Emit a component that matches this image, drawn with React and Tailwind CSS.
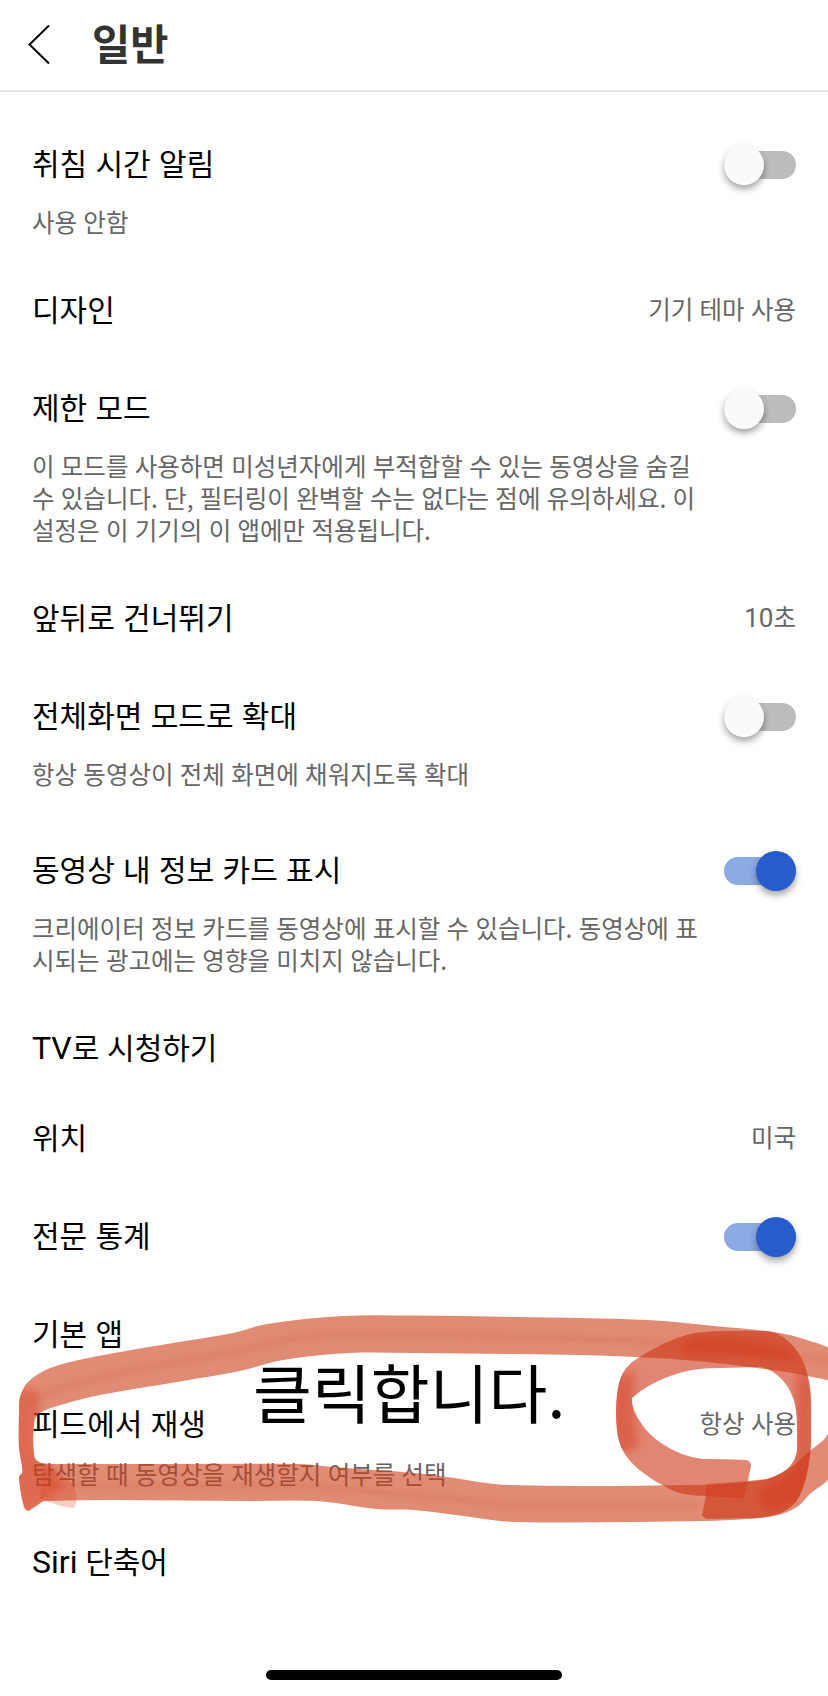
const rows = [
  { title: '취침 시간 알림', toggle: 'off', lines: ['사용 안함'] },
  { title: '디자인', value: '기기 테마 사용' },
  {
    title: '제한 모드',
    toggle: 'off',
    lines: [
      '이 모드를 사용하면 미성년자에게 부적합할 수 있는 동영상을 숨길',
      '수 있습니다. 단, 필터링이 완벽할 수는 없다는 점에 유의하세요. 이',
      '설정은 이 기기의 이 앱에만 적용됩니다.',
    ],
  },
  { title: '앞뒤로 건너뛰기', latinValue: '10', value: '초' },
  { title: '전체화면 모드로 확대', toggle: 'off', lines: ['항상 동영상이 전체 화면에 채워지도록 확대'] },
  {
    title: '동영상 내 정보 카드 표시',
    toggle: 'on',
    lines: [
      '크리에이터 정보 카드를 동영상에 표시할 수 있습니다. 동영상에 표',
      '시되는 광고에는 영향을 미치지 않습니다.',
    ],
  },
  { latin: 'TV', title: '로 시청하기' },
  { title: '위치', value: '미국' },
  { title: '전문 통계', toggle: 'on' },
  { title: '기본 앱' },
  { title: '피드에서 재생', value: '항상 사용', lines: ['탐색할 때 동영상을 재생할지 여부를 선택'] },
  { latin: 'Siri', title: ' 단축어' },
];

// Marker outlines, drawn over the "피드에서 재생" row
const loopOuter = [
  [19, 1413], [20, 1397], [28, 1382], [50, 1368], [93, 1357], [167, 1344], [233, 1333], [267, 1324],
  [343, 1316], [414, 1315.5], [514, 1317], [647, 1320], [714, 1326], [774, 1332], [807, 1340], [836, 1352],
  [860, 1380], [860, 1440], [828, 1480], [811, 1493], [797, 1507], [774, 1516], [747, 1519], [704, 1521],
  [514, 1522], [464, 1516], [414, 1510], [377, 1509], [317, 1501], [250, 1501], [46, 1501], [33, 1508],
  [28, 1511], [24, 1507], [19, 1477], [22.5, 1472], [19, 1448],
];
const loopInner = [
  [836, 1386], [807, 1376], [764, 1369], [697, 1361], [614, 1356], [514, 1354], [414, 1353], [350, 1353],
  [283, 1360], [240, 1371], [183, 1381], [100, 1395], [57, 1406], [40, 1413], [34.5, 1420], [34.5, 1457],
  [42, 1463], [67, 1464], [300, 1464], [333, 1467], [414, 1473], [447, 1477], [507, 1485], [697, 1485],
  [747, 1482], [767, 1479], [787, 1470], [811, 1450], [826, 1437], [832, 1420],
];

// Closed Catmull-Rom spline through the points
function smooth(points) {
  const n = points.length;
  let d = `M${points[0][0]} ${points[0][1]}`;
  for (let i = 0; i < n; i++) {
    const [p0, p1, p2, p3] = [points[(i - 1 + n) % n], points[i], points[(i + 1) % n], points[(i + 2) % n]];
    const len = Math.hypot(p2[0] - p1[0], p2[1] - p1[1]);
    const t1 = len / (Math.hypot(p1[0] - p0[0], p1[1] - p0[1]) + len) / 3;
    const t2 = len / (Math.hypot(p3[0] - p2[0], p3[1] - p2[1]) + len) / 3;
    d += `C${p1[0] + (p2[0] - p0[0]) * t1} ${p1[1] + (p2[1] - p0[1]) * t1} ${p2[0] - (p3[0] - p1[0]) * t2} ${p2[1] - (p3[1] - p1[1]) * t2} ${p2[0]} ${p2[1]}`;
  }
  return `${d}Z`;
}

const loop = `${smooth(loopOuter)}${smooth(loopInner)}`;
const ring =
  'M702 1515Q704 1519 710 1519L754 1518Q772 1517 781 1513Q794 1507 799 1497Q805 1485 807 1473Q811 1456 811 1440V1403Q811 1388 807 1373Q804 1359 794 1347Q784 1335 772 1332Q764 1330 724 1331Q709 1331 694 1333Q677 1337 661 1345Q643 1354 631 1363Q622 1371 619 1383Q616 1396 616 1413Q616 1435 621 1447Q627 1459 637 1468Q649 1478 664 1486Q674 1492 684 1494Q694 1496 706 1496Z' +
  'M746 1460Q720 1459 702 1459Q680 1456 661 1443Q649 1435 641 1423Q631 1409 632 1398Q641 1390 654 1383Q670 1375 687 1371Q700 1368 720 1368L761 1367Q770 1369 777 1375Q786 1382 791 1393Q797 1405 797 1425V1450Q796 1459 790 1466Q783 1474 767 1479L748 1481L751 1466Q751 1461 746 1460Z';

function Marker() {
  return (
    <svg className="pointer-events-none absolute left-0 top-[1296px] h-[240px] w-[828px] blur-[0.6px]" viewBox="0 1296 828 240" fill="none">
      <defs>
        <clipPath id="loop">
          <path d={loop} clipRule="evenodd" />
        </clipPath>
        <clipPath id="ring">
          <path d={ring} clipRule="evenodd" />
        </clipPath>
      </defs>
      <path d={loop} fillRule="evenodd" fill="#cd3e19" fillOpacity="0.6" />
      <path d="M44 1464Q64 1474 74 1486Q79 1500 74 1508Q58 1507 40 1498Z" fill="#d93a18" fillOpacity="0.25" />
      <g clipPath="url(#loop)">
        <g className="blur-[4px]" fill="#d93a18">
          <path d="M12 1395Q22 1384 38 1390V1455Q60 1470 62 1488Q45 1500 28 1516L12 1500Z" fillOpacity="0.4" />
        </g>
        <g className="blur-[2px]" stroke="#d0401f" strokeOpacity="0.12" strokeWidth="8">
          <path d="M30 1402Q60 1384 150 1367L235 1352Q290 1336 345 1334H420L640 1341L840 1362" />
          <path d="M50 1486H305L400 1494Q470 1500 510 1506H700" />
        </g>
      </g>
      <path d={ring} fillRule="evenodd" fill="#cd3614" fillOpacity="0.6" />
      <path d="M706 1484L748 1481L744 1498L705 1496Z" fill="#cf3012" fillOpacity="0.4" />
      <g clipPath="url(#ring)">
        <g className="blur-[4px]" fill="#d33314" fillOpacity="0.42">
          <path d="M610 1375L634 1372L635 1425L640 1445L620 1455L610 1440Z" />
          <path d="M796 1375L815 1370V1470L806 1500L770 1512L755 1495L794 1470Z" />
          <path d="M690 1338Q740 1334 790 1350L796 1362Q740 1350 680 1354Z" />
        </g>
      </g>
    </svg>
  );
}

function Toggle({ on }) {
  return (
    <div
      className={
        on
          ? 'mt-0.5 flex h-7 w-[72px] items-center justify-end rounded-full bg-[#8cabe3]'
          : 'mt-0.5 flex h-7 w-[72px] items-center rounded-full bg-[#bcbcbc]'
      }
    >
      <div
        className={
          on
            ? 'size-10 shrink-0 rounded-full bg-[#275ccc] shadow-[0_4px_7px_rgba(0,0,0,0.36)]'
            : 'size-10 shrink-0 rounded-full bg-[#fafafa] shadow-[0_4px_7px_rgba(0,0,0,0.36)]'
        }
      />
    </div>
  );
}

function Row({ row }) {
  return (
    <div>
      <div className={row.toggle ? 'flex h-[106px] items-center justify-between' : 'flex h-[90px] items-center justify-between'}>
        <div
          className={
            row.latin
              ? 'mb-0.5 whitespace-pre text-[30px] leading-10 text-black [word-spacing:1px]'
              : 'mb-1 whitespace-pre text-[30px] leading-10 text-black [word-spacing:1.6px]'
          }
        >
          {row.latin && <span className="font-[Roboto] text-[32px]">{row.latin}</span>}
          {row.title}
        </div>
        {row.toggle && <Toggle on={row.toggle === 'on'} />}
        {row.value && (
          <div
            className={
              row.latinValue
                ? 'mb-px text-[24.5px] leading-8 text-[#666]'
                : 'mb-[3px] text-[24.5px] leading-8 text-[#666] [word-spacing:0.8px]'
            }
          >
            {row.latinValue && <span className="font-[Roboto] text-[26px]">{row.latinValue}</span>}
            {row.value}
          </div>
        )}
      </div>
      {row.lines && (
        <div className="-mt-[11px] pb-[27px] text-[24.5px] leading-8 text-[#666] [word-spacing:0.8px]">
          {row.lines.map((line) => (
            <p key={line} className="whitespace-nowrap">{line}</p>
          ))}
        </div>
      )}
    </div>
  );
}

export default function App() {
  return (
    <div className="relative flex h-[1696px] w-[828px] flex-col overflow-hidden bg-white font-['Noto_Sans_CJK_KR',sans-serif]">
      <header className="flex h-[92px] shrink-0 items-center border-b-2 border-[#e4e4e4] pl-7">
        <svg className="h-10 w-[22px]" viewBox="0 0 22 40" fill="none" stroke="#000" strokeWidth="2">
          <path d="M21 0.5L1.5 19.5L21 38.5" />
        </svg>
        <h1 className="mb-1.5 ml-[42px] text-[41.5px] leading-[60px] font-bold text-[#333]">일반</h1>
      </header>
      <main className="px-8 pt-[19px]">
        {rows.map((row) => (
          <Row key={row.title} row={row} />
        ))}
      </main>
      <div className="mx-auto mt-[63px] h-[10px] w-[296px] rounded-full bg-black" />
      <Marker />
      <div className="absolute left-[253px] top-[1345px] text-[64px] leading-[90px] text-black">클릭합니다.</div>
    </div>
  );
}
